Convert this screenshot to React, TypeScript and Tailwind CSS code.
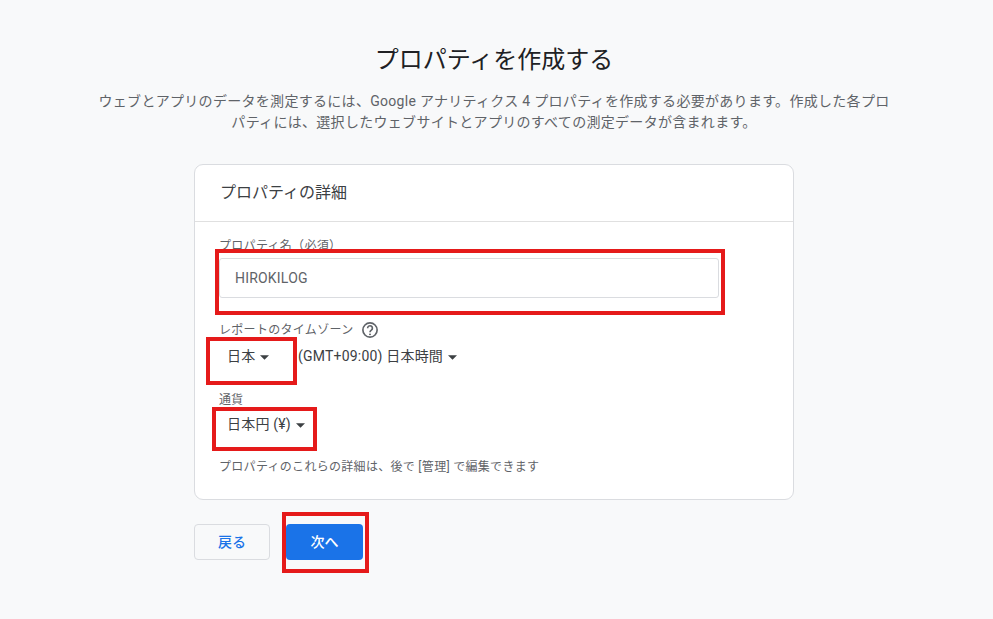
const font = { fontFamily: '"Roboto", "Noto Sans CJK JP", sans-serif' };

const Caret = () => (
  <svg width="9" height="5" viewBox="0 0 10 5" className="ml-[5px] mt-[2px]">
    <path d="M0 0l5 5 5-5z" fill="#3c4043" />
  </svg>
);

const Help = () => (
  <svg width="18" height="18" viewBox="0 0 24 24" fill="none">
    <circle cx="12" cy="12" r="9.5" stroke="#5f6368" strokeWidth="2.2" />
    <path d="M8.8 9.6a3.2 3.2 0 1 1 5 2.6c-1 .7-1.8 1.3-1.8 2.8" stroke="#5f6368" strokeWidth="2.2" />
    <circle cx="12" cy="17.8" r="1.3" fill="#5f6368" />
  </svg>
);

const RedBox = ({ className }: { className: string }) => (
  <div className={`absolute border-4 border-[#e51a1a] pointer-events-none ${className}`} />
);

export default function App() {
  return (
    <div className="relative h-[619px] w-[993px] overflow-hidden bg-[#f8f9fa]" style={font}>
      <div className="flex flex-col items-center pt-[43px] pr-[5px]">
        <h1 className="text-[24px] leading-[34px] text-[#202124]">プロパティを作成する</h1>
        <p className="mt-[14px] w-[800px] text-center text-[14px] leading-[21px] tracking-[0.3px] text-[#5f6368]">
          ウェブとアプリのデータを測定するには、Google アナリティクス 4 プロパティを作成する必要があります。作成した各プロパティには、選択したウェブサイトとアプリのすべての測定データが含まれます。
        </p>

        <div className="mt-[31px] w-[600px] rounded-[9px] border border-[#dadce0] bg-white">
          <div className="flex h-[57px] items-center border-b border-[#e0e0e0] pl-[25px] text-[16px] text-[#3c4043]">
            プロパティの詳細
          </div>
          <div className="h-[277px] pl-[24px] pt-[15px]">
            <div className="text-[12px] leading-[18px] tracking-[0.3px] text-[#5f6368]">プロパティ名（必須）</div>
            <div className="mt-[3px] flex h-[40px] w-[500px] items-center rounded-[3px] border border-[#dadce0] pl-[15px] text-[14px] tracking-[0.2px] text-[#5f6368]">
              HIROKILOG
            </div>
            <div className="mt-[22px] flex h-[20px] items-center gap-[8px] text-[12px] tracking-[0.3px] text-[#5f6368]">
              レポートのタイムゾーン
              <Help />
            </div>
            <div className="mt-[4px] flex h-[24px] items-center text-[14px] tracking-[0.2px] text-[#3c4043]">
              <div className="flex w-[79px] items-center pl-[8px]">
                日本
                <Caret />
              </div>
              <div className="flex items-center">
                (GMT+09:00) 日本時間
                <Caret />
              </div>
            </div>
            <div className="mt-[23px] text-[12px] leading-[18px] text-[#5f6368]">通貨</div>
            <div className="mt-[3px] flex h-[24px] items-center pl-[8px] text-[14px] tracking-[0.2px] text-[#3c4043]">
              日本円 (¥)
              <Caret />
            </div>
            <div className="mt-[22px] text-[12px] leading-[18px] tracking-[0.3px] text-[#5f6368]">
              プロパティのこれらの詳細は、後で [管理] で編集できます
            </div>
          </div>
        </div>

        <div className="mt-[24px] flex w-[600px] gap-[16px]">
          <button className="h-[36px] w-[76px] rounded-[4px] border border-[#dadce0] text-[14px] font-medium text-[#1a73e8]">
            戻る
          </button>
          <button className="h-[36px] w-[77px] rounded-[4px] bg-[#1a73e8] text-[14px] font-medium text-white">
            次へ
          </button>
        </div>
      </div>

      <RedBox className="left-[215px] top-[249px] h-[66px] w-[510px]" />
      <RedBox className="left-[206px] top-[337px] h-[48px] w-[91px]" />
      <RedBox className="left-[212px] top-[407px] h-[44px] w-[105px]" />
      <RedBox className="left-[282px] top-[512px] h-[61px] w-[87px]" />
    </div>
  );
}
